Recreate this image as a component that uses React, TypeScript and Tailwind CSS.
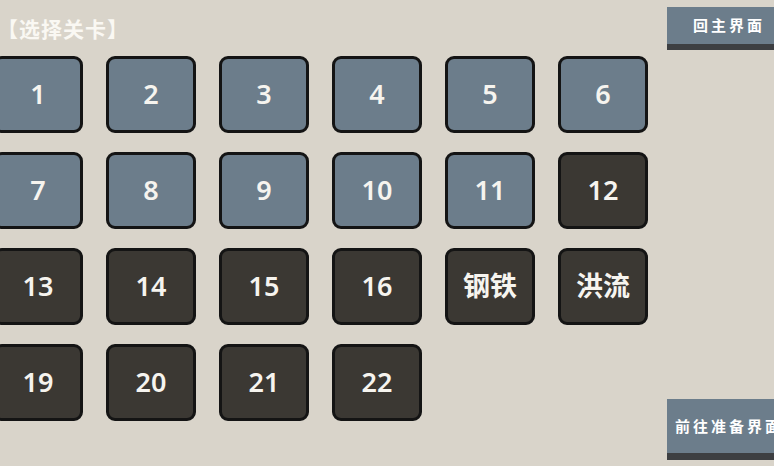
import React from "react";

const levels: { label: string; unlocked: boolean }[] = [
  ...Array.from({ length: 11 }, (_, i) => ({ label: String(i + 1), unlocked: true })),
  ...["12", "13", "14", "15", "16", "钢铁", "洪流", "19", "20", "21", "22"].map((label) => ({
    label,
    unlocked: false,
  })),
];

export default function App() {
  return (
    <div
      className="w-[774px] h-[466px] overflow-hidden bg-[#d9d4ca] flex"
      style={{ fontFamily: '"Noto Sans", "Noto Sans CJK SC", sans-serif' }}
    >
      {/* Level select */}
      <div className="w-[667px] shrink-0 pt-[15px]">
        <div className="text-[21px] leading-[28px] font-bold text-[#faf8f3] tracking-[1px] ml-[-3px]">
          【选择关卡】
        </div>
        <div className="mt-[13px] ml-[-7px] grid grid-cols-[repeat(6,90px)] gap-x-[23px] gap-y-[19px]">
          {levels.map((lv) => (
            <button
              key={lv.label}
              className={`h-[77px] rounded-[9px] border-[3px] border-[#141414] flex items-center justify-center text-[27px] font-semibold text-[#f6f4ef] ${
                lv.unlocked ? "bg-[#6c7d8b]" : "bg-[#3b3833]"
              }`}
            >
              {lv.label}
            </button>
          ))}
        </div>
      </div>

      {/* Side buttons */}
      <div className="flex-1 flex flex-col justify-between pt-[7px] pb-[6px]">
        <button className="h-[43px] w-[130px] bg-[#6c7d8b] border-b-[6px] border-[#3d3f42] flex items-center pl-[26px] text-[15px] font-bold text-white tracking-[3px] whitespace-nowrap">
          回主界面
        </button>
        <button className="h-[61px] w-[130px] bg-[#6c7d8b] border-b-[7px] border-[#3d3f42] flex items-center pl-[8px] text-[15px] font-bold text-white tracking-[3px] whitespace-nowrap overflow-hidden">
          前往准备界面
        </button>
      </div>
    </div>
  );
}
